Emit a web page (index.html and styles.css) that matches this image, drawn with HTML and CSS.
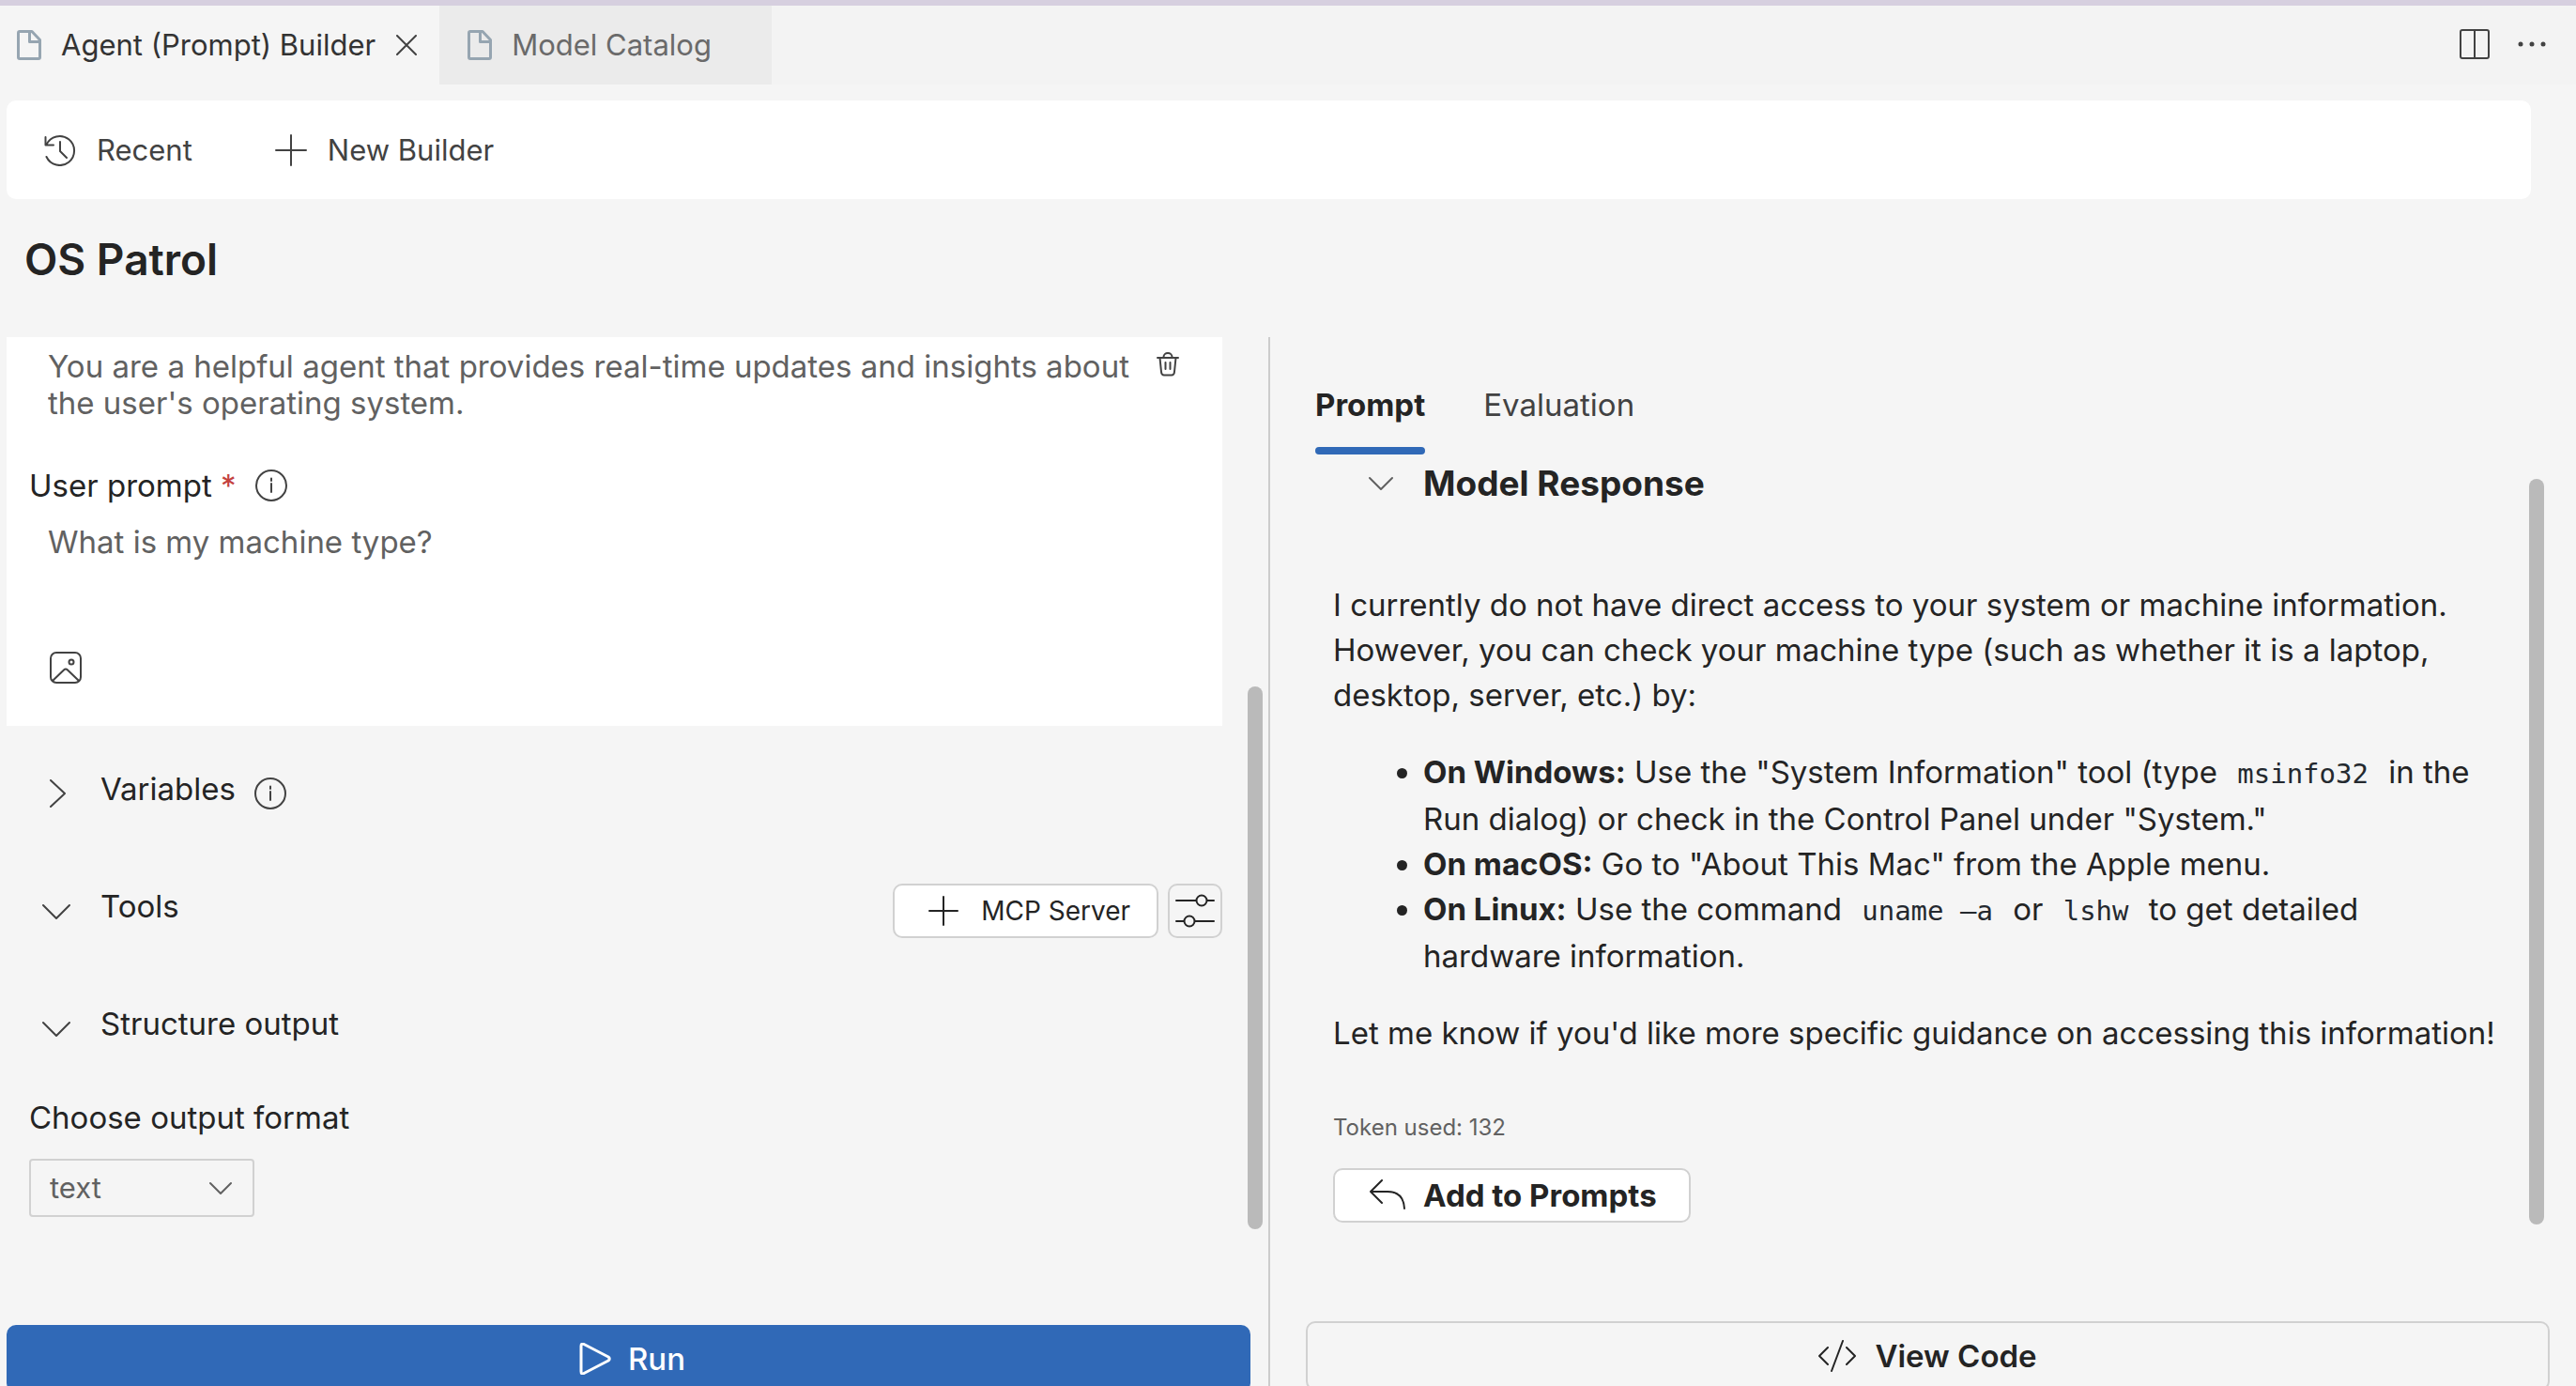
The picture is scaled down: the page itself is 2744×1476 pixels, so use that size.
FILE: index.html
```html
<!DOCTYPE html>
<html lang="en">
<head>
<meta charset="utf-8">
<title>Agent (Prompt) Builder</title>
<link rel="stylesheet" href="styles.css">
</head>
<body>
<div class="app">
  <header class="tabbar">
    <div class="tab tab-active">
      <svg class="file-icon" viewBox="0 0 26 32"><path d="M2.500 1.500H16L24.500 10.500V29Q24.500 30.500 23 30.500H3Q1.500 30.500 1.500 29V3Q1.500 1.500 3 1.500ZM13.500 1.500V12.500H24.500"/></svg>
      <span>Agent (Prompt) Builder</span>
      <button class="icon-button tab-close" aria-label="Close"><svg width="22" height="22" viewBox="0 0 22 22"><path d="M1 1L21 21M21 1L1 21"/></svg></button>
    </div>
    <div class="tab tab-idle">
      <svg class="file-icon" viewBox="0 0 26 32"><path d="M2.500 1.500H16L24.500 10.500V29Q24.500 30.500 23 30.500H3Q1.500 30.500 1.500 29V3Q1.500 1.500 3 1.500ZM13.500 1.500V12.500H24.500"/></svg>
      <span>Model Catalog</span>
    </div>
    <div class="window-actions">
      <button class="icon-button" aria-label="Split editor"><svg width="32" height="32" viewBox="0 0 32 32"><rect x="1" y="1" width="30" height="30" rx="2"/><path d="M16 1V31"/></svg></button>
      <button class="icon-button" aria-label="More actions"><svg class="dots" width="30" height="32" viewBox="0 0 30 32"><circle cx="3" cy="16" r="2.500"/><circle cx="15" cy="16" r="2.500"/><circle cx="27" cy="16" r="2.500"/></svg></button>
    </div>
  </header>

  <nav class="toolbar">
    <button class="tool"><svg width="34" height="34" viewBox="0 0 34 34"><path d="M1.500 3V11.500H10M2.500 11A15.500 15.500 0 1 1 2.500 24M17 8V18L24 25"/></svg>Recent</button>
    <button class="tool"><svg width="34" height="34" viewBox="0 0 34 34"><path d="M17 1V33M1 17H33"/></svg>New Builder</button>
  </nav>

  <h1 class="title">OS Patrol</h1>

  <main class="workspace">
    <section class="pane pane-left">
      <div class="card">
        <div class="field">
          <textarea class="prompt" rows="2" aria-label="System prompt">You are a helpful agent that provides real-time updates and insights about the user's operating system.</textarea>
          <button class="icon-button trash" aria-label="Delete"><svg width="24" height="26" viewBox="0 0 24 26"><path d="M1 6H23M7.500 6V5A4.500 4 0 0 1 16.500 5V6M3.500 6L5 21Q5.300 24.500 8 24.500H16Q18.700 24.500 19 21L20.500 6M9.500 11V18M14.500 11V18"/></svg></button>
        </div>
        <div class="field-label">
          <label for="user-prompt">User prompt <span class="required">*</span></label>
          <svg class="info" viewBox="0 0 34 34"><circle cx="17" cy="17" r="16"/><path d="M17 15V24M17 9.500V12"/></svg>
        </div>
        <textarea class="prompt" id="user-prompt" rows="3">What is my machine type?</textarea>
        <button class="icon-button attach" aria-label="Attach image"><svg width="34" height="34" viewBox="0 0 34 34"><rect x="1" y="1" width="32" height="32" rx="6"/><circle cx="23" cy="11" r="2.500"/><path d="M3 31L15 19.500Q17 17.500 19 19.500L31 31"/></svg></button>
      </div>

      <div class="sections">
        <div class="section-row">
          <svg class="chevron" viewBox="0 0 30 30"><path d="M9 1L24 15L9 29"/></svg>
          <h2>Variables</h2>
          <svg class="info" viewBox="0 0 34 34"><circle cx="17" cy="17" r="16"/><path d="M17 15V24M17 9.500V12"/></svg>
        </div>
        <div class="section-row">
          <svg class="chevron" viewBox="0 0 30 30"><path d="M1 9L15 23L29 9"/></svg>
          <h2>Tools</h2>
          <div class="row-actions">
            <button class="mcp"><svg width="32" height="32" viewBox="0 0 32 32"><path d="M16 1V31M1 16H31"/></svg>MCP Server</button>
            <button class="tune" aria-label="Tool settings"><svg width="42" height="36" viewBox="0 0 42 36"><path d="M1 7H22M34 7H41M1 29H9M21 29H41"/><circle cx="28" cy="7" r="5.500"/><circle cx="15" cy="29" r="5.500"/></svg></button>
          </div>
        </div>
        <div class="section-row">
          <svg class="chevron" viewBox="0 0 30 30"><path d="M1 9L15 23L29 9"/></svg>
          <h2>Structure output</h2>
        </div>
      </div>

      <div class="format">
        <label for="format">Choose output format</label>
        <div class="select-wrap">
          <select id="format"><option>text</option></select>
          <svg class="select-arrow" viewBox="0 0 24 24"><path d="M1 6L12 17L23 6"/></svg>
        </div>
      </div>
      <button class="run"><svg width="34" height="34" viewBox="0 0 34 34"><path d="M2 3.500Q2 0 5 1.500L31 15Q33.500 17 31 19L5 32.500Q2 34 2 30.500Z"/></svg>Run</button>
      <div class="scrollbar"></div>
    </section>

    <section class="pane pane-right">
      <div class="subtabs" role="tablist">
        <button class="subtab subtab-active" role="tab">Prompt</button>
        <button class="subtab" role="tab">Evaluation</button>
      </div>
      <div class="response-head">
        <svg class="small-chevron" viewBox="0 0 26 26"><path d="M1 7L13 19L25 7"/></svg>
        <h2>Model Response</h2>
      </div>
      <div class="response">
        <p>I currently do not have direct access to your system or machine information. However, you can check your machine type (such as whether it is a laptop, desktop, server, etc.) by:</p>
        <ul>
          <li><strong>On Windows:</strong> Use the "System Information" tool (type <code>msinfo32</code> in the Run dialog) or check in the Control Panel under "System."</li>
          <li><strong>On macOS:</strong> Go to "About This Mac" from the Apple menu.</li>
          <li><strong>On Linux:</strong> Use the command <code>uname –a</code> or <code>lshw</code> to get detailed hardware information.</li>
        </ul>
        <p>Let me know if you'd like more specific guidance on accessing this information!</p>
        <div class="tokens">Token used: 132</div>
        <button class="add"><svg width="40" height="34" viewBox="0 0 40 34"><path d="M14 1L2 13L14 25M2 13H20Q37 13 38 31"/></svg>Add to Prompts</button>
      </div>
      <button class="view-code"><svg width="40" height="34" viewBox="0 0 40 34"><path d="M10 8L1 17L10 26M30 8L39 17L30 26M26 1L14 33"/></svg>View Code</button>
      <div class="scrollbar"></div>
    </section>
  </main>
</div>
</body>
</html>
```
FILE: styles.css
```css
* { box-sizing: border-box; }

body {
  margin: 0;
  overflow: hidden;
  background: #f5f5f5;
  color: #242424;
  font-family: Inter, "Liberation Sans", sans-serif;
  font-size: 33px;
  line-height: 40px;
}

h1, h2, p, ul { margin: 0; }

button {
  display: flex;
  align-items: center;
  justify-content: center;
  padding: 0;
  border: 0;
  background: none;
  color: inherit;
  font: inherit;
  white-space: nowrap;
}

svg {
  display: block;
  flex: none;
  fill: none;
  stroke: #424242;
  stroke-width: 2;
  stroke-linecap: round;
  stroke-linejoin: round;
}

.app { border-top: 6px solid #d6cfdf; }

/* Editor tabs */
.tabbar {
  display: flex;
  height: 84px;
  background: #f3f3f3;
  font-size: 31px;
}

.tab {
  display: flex;
  align-items: center;
  white-space: nowrap;
}

.tab-active {
  padding: 0 24px 0 18px;
  background: #f5f5f5;
  color: #333;
}

.tab-idle {
  padding: 0 64px 0 30px;
  background: #ebebeb;
  color: #6a6a6a;
}

.file-icon {
  width: 26px;
  height: 32px;
  margin-right: 21px;
  stroke: #96a5b1;
  stroke-width: 3;
}

.tab-close { margin-left: 22px; }

.window-actions {
  display: flex;
  align-items: center;
  gap: 30px;
  margin-left: auto;
  padding: 0 32px 2px 0;
}

.dots {
  fill: #424242;
  stroke: none;
}

/* Toolbar and title */
.toolbar {
  display: flex;
  align-items: center;
  gap: 88px;
  height: 105px;
  margin: 17px 48px 0 7px;
  padding: 0 40px;
  border-radius: 10px;
  background: #fff;
  color: #424242;
  font-size: 31px;
}

.tool { gap: 22px; }

.title {
  margin: 34px 26px 53px;
  font-size: 46px;
  font-weight: 600;
  line-height: 60px;
}

.workspace {
  display: grid;
  grid-template-columns: minmax(0, 1353fr) minmax(0, 1391fr);
}

.pane {
  position: relative;
  display: flex;
  flex-direction: column;
}

.pane-left {
  padding: 0 19px 0 7px;
  border-right: 2px solid #ccc;
}

/* Prompt card */
.card {
  margin-right: 30px;
  padding: 12px 46px 45px 44px;
  background: #fff;
}

.field {
  display: flex;
  align-items: flex-start;
  gap: 20px;
}

.prompt {
  display: block;
  flex: 1;
  width: 100%;
  padding: 0;
  border: 0;
  outline: 0;
  overflow: hidden;
  resize: none;
  background: none;
  color: #616161;
  font: inherit;
  line-height: 39px;
}

.trash { padding-top: 4px; }

.field-label {
  display: flex;
  align-items: center;
  gap: 20px;
  margin: 48px 0 21px -20px;
}

.required { color: #c4423f; }

.info {
  width: 34px;
  height: 34px;
}

.attach { margin: 19px 0 0 2px; }

/* Collapsible sections */
.sections {
  display: grid;
  gap: 67px;
  margin: 43px 30px 46px 38px;
}

.section-row {
  display: flex;
  align-items: center;
  height: 58px;
}

.section-row h2 {
  margin: 0 20px 0 32px;
  padding-bottom: 10px;
  font-size: 33px;
  font-weight: 400;
}

.chevron {
  width: 30px;
  height: 30px;
}

.row-actions {
  display: flex;
  gap: 10px;
  margin-left: auto;
}

.row-actions svg,
.pane-right button svg { stroke: #242424; }

.mcp,
.tune,
.add,
.view-code {
  height: 58px;
  border: 2px solid #d1d1d1;
  border-radius: 10px;
}

.mcp {
  gap: 24px;
  padding: 0 28px 0 36px;
  background: #fff;
  font-size: 28px;
}

.tune { width: 58px; }

.format {
  display: grid;
  gap: 24px;
  margin: 0 0 115px 24px;
}

.select-wrap {
  position: relative;
  width: 240px;
}

.select-wrap select {
  display: block;
  appearance: none;
  width: 100%;
  height: 62px;
  padding: 0 20px;
  border: 2px solid #d1d1d1;
  border-radius: 4px;
  background: none;
  color: #616161;
  font: inherit;
  font-size: 31px;
}

.select-arrow {
  position: absolute;
  top: 20px;
  right: 24px;
  width: 24px;
  height: 24px;
  stroke: #616161;
  pointer-events: none;
}

.run {
  gap: 18px;
  height: 72px;
  padding-left: 8px;
  border-radius: 10px;
  background: #3069b7;
  color: #fff;
  font-weight: 500;
}

.run svg {
  stroke: #fff;
  stroke-width: 3;
}

.scrollbar {
  position: absolute;
  top: 372px;
  right: 6px;
  width: 16px;
  height: 578px;
  border-radius: 8px;
  background: #bababa;
}

/* Response pane */
.pane-right { padding: 52px 28px 0 38px; }

.pane-right .scrollbar {
  top: 151px;
  right: 34px;
  height: 794px;
}

.subtabs {
  display: flex;
  gap: 62px;
  margin-left: 10px;
}

.subtab {
  padding-bottom: 33px;
  color: #424242;
}

.subtab-active {
  position: relative;
  color: #242424;
  font-weight: 700;
}

.subtab-active::after {
  content: "";
  position: absolute;
  inset: auto 0 0;
  height: 8px;
  border-radius: 4px;
  background: #3069b7;
}

.response-head {
  display: flex;
  align-items: center;
  gap: 32px;
  margin: 9px 0 0 67px;
}

.response-head h2 {
  font-size: 37px;
  font-weight: 700;
  line-height: 44px;
}

.small-chevron {
  width: 26px;
  height: 26px;
  stroke: #616161;
}

.response {
  margin: 83px 48px 105px 29px;
  line-height: 48px;
}

.response ul {
  margin: 34px 0;
  padding-left: 96px;
}

.response strong { font-weight: 700; }

.response code {
  padding: 0 12px;
  color: #24292f;
  font-family: "DejaVu Sans Mono", monospace;
  font-size: 29px;
}

.tokens {
  margin: 61px 0 27px;
  color: #616161;
  font-size: 24px;
  line-height: 32px;
}

.add {
  gap: 18px;
  padding: 0 34px 0 36px;
  background: #fff;
  font-weight: 700;
}

.view-code {
  gap: 20px;
  height: 74px;
  font-weight: 600;
}
```
